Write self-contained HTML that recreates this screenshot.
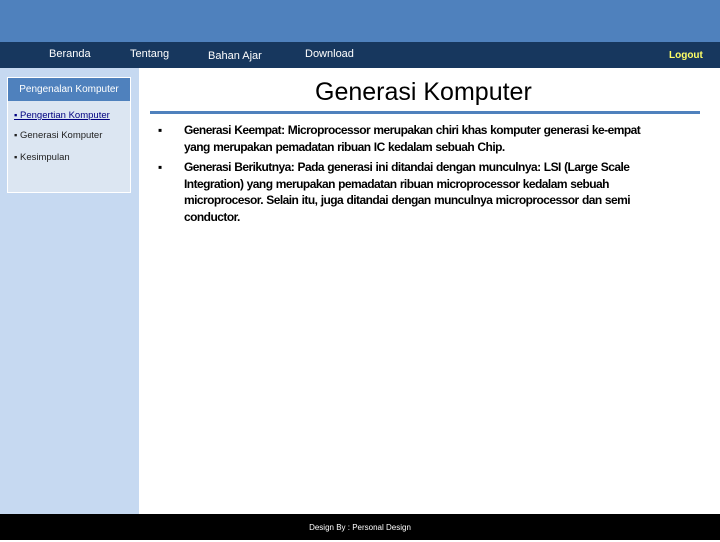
<!DOCTYPE html>
<html><head><style>
*{margin:0;padding:0;box-sizing:border-box}
body{width:720px;height:540px;position:relative;overflow:hidden;background:#fff;font-family:"Liberation Sans",sans-serif}
.a{position:absolute}
.nav{color:#fff;font-size:11px;top:48px}
.t{font-size:12px;color:#000}
.b{font-weight:bold;letter-spacing:-0.55px;word-spacing:0.5px}
</style></head><body>
<div class="a" style="left:0;top:0;width:720px;height:42px;background:#4f81bd"></div>
<div class="a" style="left:0;top:42px;width:720px;height:26px;background:#17375e"></div>
<div class="a nav" style="left:49px">Beranda</div>
<div class="a nav" style="left:130px">Tentang</div>
<div class="a nav" style="left:208px;top:50px">Bahan Ajar</div>
<div class="a nav" style="left:305px">Download</div>
<div class="a nav" style="left:669px;top:50px;color:#ffff66;font-weight:bold;font-size:10px">Logout</div>
<div class="a" style="left:0;top:68px;width:139px;height:446px;background:#c6d9f1"></div>
<div class="a" style="left:7px;top:77px;width:124px;height:116px;background:#dce6f2;border:1px solid #fff"></div>
<div class="a" style="left:8px;top:78px;width:122px;height:23px;background:#4f81bd;color:#fff;font-size:10px;line-height:23px;text-align:center">Pengenalan Komputer</div>
<div class="a" style="left:14px;top:110px;font-size:9.5px;color:#000080;text-decoration:underline">▪ Pengertian Komputer</div>
<div class="a" style="left:14px;top:130px;font-size:9.5px;color:#222">▪ Generasi Komputer</div>
<div class="a" style="left:14px;top:152px;font-size:9.5px;color:#222">▪ Kesimpulan</div>
<div class="a" style="left:315px;top:78px;font-size:25px;color:#000">Generasi Komputer</div>
<div class="a" style="left:150px;top:111px;width:550px;height:3px;background:#4f81bd"></div>
<div class="a t" style="left:158px;top:123px">▪</div>
<div class="a t b" style="left:184px;top:122px;width:520px;line-height:16.5px">Generasi Keempat: Microprocessor merupakan chiri khas komputer generasi ke-empat<br>yang merupakan pemadatan ribuan IC kedalam sebuah Chip.</div>
<div class="a t" style="left:158px;top:160px">▪</div>
<div class="a t b" style="left:184px;top:159px;width:490px;line-height:16.5px">Generasi Berikutnya: Pada generasi ini ditandai dengan munculnya: LSI (Large Scale Integration) yang merupakan pemadatan ribuan microprocessor kedalam sebuah microprocesor. Selain itu, juga ditandai dengan munculnya microprocessor dan semi conductor.</div>
<div class="a" style="left:0;top:514px;width:720px;height:26px;background:#000;color:#fff;font-size:8px;text-align:center;line-height:28px">Design By : Personal Design</div>
</body></html>
